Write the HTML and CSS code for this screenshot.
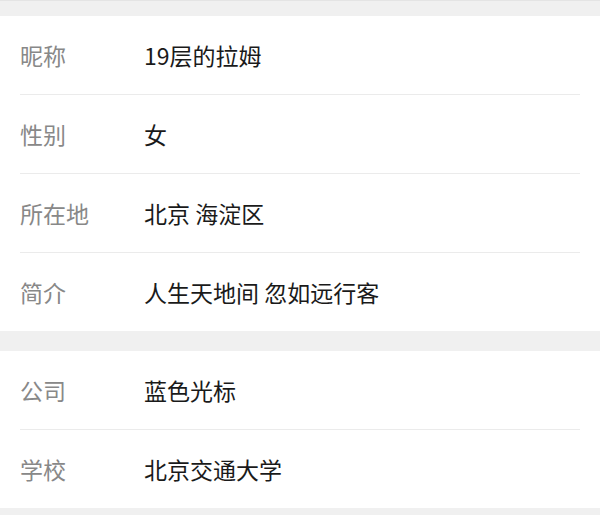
FILE: index.html
```html
<!DOCTYPE html>
<html lang="zh-CN">
<head>
    <meta charset="UTF-8">
    <meta name="viewport" content="width=device-width, initial-scale=1.0">
    <title>个人信息</title>
    <link rel="stylesheet" href="styles.css">
</head>
<body>
    <div class="group">
        <div class="row"><span class="label">昵称</span><span class="value">19层的拉姆</span></div>
        <div class="row"><span class="label">性别</span><span class="value">女</span></div>
        <div class="row"><span class="label">所在地</span><span class="value">北京 海淀区</span></div>
        <div class="row"><span class="label">简介</span><span class="value">人生天地间 忽如远行客</span></div>
    </div>

    <div class="group">
        <div class="row"><span class="label">公司</span><span class="value">蓝色光标</span></div>
        <div class="row"><span class="label">学校</span><span class="value">北京交通大学</span></div>
    </div>
</body>
</html>
```

FILE: styles.css
```css
body {
    font-family: "Noto Sans CJK SC", "Noto Sans", sans-serif;
    margin: 0;
    padding: 15px 0 0;
    background-color: #f0f0f0;
    border-top: 1px solid #e4e4e4;
    box-sizing: border-box;
    height: 515px;
}
.group {
    background-color: #fff;
    padding: 0 20px;
    margin-bottom: 20px;
}
.row {
    display: flex;
    align-items: center;
    height: 78px;
    border-bottom: 1px solid #ebebeb;
    font-size: 23px;
}
.row:last-child {
    border-bottom: none;
}
.label {
    width: 124px;
    color: #888;
}
.value {
    color: #1a1a1a;
}
```
